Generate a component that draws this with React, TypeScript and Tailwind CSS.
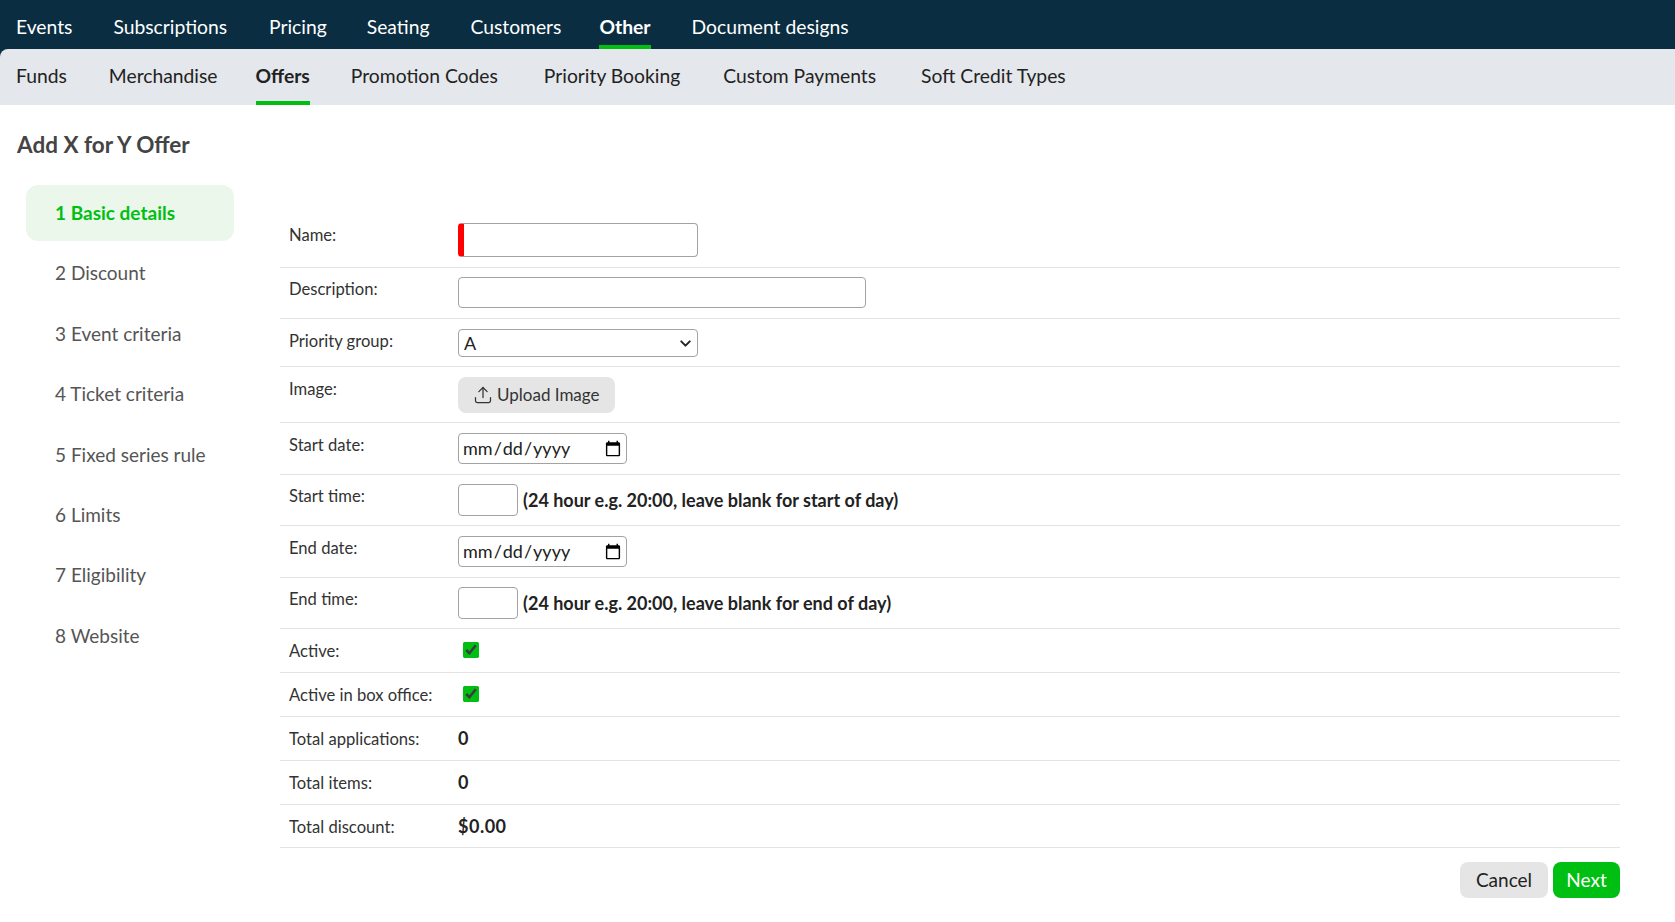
import React from 'react';
import { Upload, ChevronDown } from 'lucide-react';

const topNav = [
  { label: 'Events', gap: '' },
  { label: 'Subscriptions', gap: 'ml-[41px]' },
  { label: 'Pricing', gap: 'ml-[42px]' },
  { label: 'Seating', gap: 'ml-[40px]' },
  { label: 'Customers', gap: 'ml-[41px]' },
  { label: 'Other', gap: 'ml-[38px]' },
  { label: 'Document designs', gap: 'ml-[41px]' },
];
const subNav = [
  { label: 'Funds', gap: '' },
  { label: 'Merchandise', gap: 'ml-[42px]' },
  { label: 'Offers', gap: 'ml-[38px]' },
  { label: 'Promotion Codes', gap: 'ml-[41px]' },
  { label: 'Priority Booking', gap: 'ml-[46px]' },
  { label: 'Custom Payments', gap: 'ml-[43px]' },
  { label: 'Soft Credit Types', gap: 'ml-[45px]' },
];
const steps = ['1 Basic details', '2 Discount', '3 Event criteria', '4 Ticket criteria', '5 Fixed series rule', '6 Limits', '7 Eligibility', '8 Website'];

const inputClass = 'border border-[#a3a3a3] rounded-[4px] bg-white text-[18px] text-[#222]';

function Row({ label, height, tight, children }: { label: string; height: string; tight?: boolean; children: React.ReactNode }) {
  return (
    <div className={`flex border-b border-[#e3e3e3] box-border ${tight ? 'pt-[9px]' : 'pt-[10px]'} ${height}`}>
      <div className="w-[178px] pl-[9px] text-[16.6px] leading-[24px] text-[#333]">{label}</div>
      <div className="flex items-start">{children}</div>
    </div>
  );
}

function Hint({ children }: { children: React.ReactNode }) {
  return <span className="ml-[5px] mt-[4px] text-[18px] leading-[24px] font-bold text-[#222]">{children}</span>;
}

function Value({ children }: { children: React.ReactNode }) {
  return <span className="-mt-[1px] text-[18px] tracking-[0.5px] leading-[24px] font-bold text-[#222]">{children}</span>;
}

export default function App() {
  return (
    <div className="min-h-[922px] bg-white font-['Lato','Liberation_Sans',sans-serif]">
      <nav className="h-[49px] bg-[#0a2d41] flex pl-[16px]">
        {topNav.map((item) => (
          <a
            key={item.label}
            className={`h-[49px] border-b-[4px] text-[19.3px] leading-[53px] text-white ${item.gap} ${
              item.label === 'Other' ? 'border-[#00bf13] font-bold' : 'border-transparent'
            }`}
          >
            {item.label}
          </a>
        ))}
      </nav>

      <div className="bg-[#0a2d41]">
        <nav className="h-[56px] bg-[#e4e7eb] rounded-tl-[8px] flex pl-[16px]">
          {subNav.map((item) => (
            <a
              key={item.label}
              className={`h-[56px] border-b-[4px] text-[19.3px] leading-[53px] text-[#222] ${item.gap} ${
                item.label === 'Offers' ? 'border-[#00bf13] font-bold' : 'border-transparent'
              }`}
            >
              {item.label}
            </a>
          ))}
        </nav>
      </div>

      <h1 className="pl-[17px] pt-[26px] text-[22.5px] leading-[28px] font-bold text-[#444]">Add X for Y Offer</h1>

      <div className="flex pl-[26px] pr-[55px] pt-[26px]">
        <aside className="w-[208px] shrink-0">
          {steps.map((step, i) => (
            <div
              key={step}
              className={`h-[56px] mb-[4.4px] pl-[29px] rounded-[12px] text-[19px] leading-[56px] ${
                i === 0 ? 'bg-[#ecf7ec] text-[#00bf13] font-bold' : 'text-[#555]'
              }`}
            >
              {step}
            </div>
          ))}
        </aside>

        <main className="flex-1 ml-[46px] pt-[28px]">
          <Row label="Name:" height="h-[55px]">
            <input className={`${inputClass} w-[240px] h-[34px] border-l-[6px] border-l-[#f00]`} />
          </Row>
          <Row label="Description:" height="h-[51px]" tight>
            <input className={`${inputClass} w-[408px] h-[31px]`} />
          </Row>
          <Row label="Priority group:" height="h-[48px]">
            <div className="relative">
              <select className={`${inputClass} block appearance-none w-[240px] h-[28px] pl-[5px]`}>
                <option>A</option>
              </select>
              <ChevronDown size={17} strokeWidth={2.75} className="absolute right-[4px] top-[6px] text-[#222] pointer-events-none" />
            </div>
          </Row>
          <Row label="Image:" height="h-[56px]">
            <button className="flex items-center gap-[4px] w-[157px] h-[36px] pl-[15px] rounded-[8px] bg-[#e5e5e5] text-[17px] text-[#333]">
              <Upload size={20} strokeWidth={1.5} />
              Upload Image
            </button>
          </Row>
          <Row label="Start date:" height="h-[52px]">
            <input type="date" className={`${inputClass} w-[169px] h-[31px] pl-[3px] pr-[2px]`} />
          </Row>
          <Row label="Start time:" height="h-[51px]" tight>
            <input className={`${inputClass} w-[60px] h-[32px]`} />
            <Hint>(24 hour e.g. 20:00, leave blank for start of day)</Hint>
          </Row>
          <Row label="End date:" height="h-[52px]">
            <input type="date" className={`${inputClass} w-[169px] h-[31px] pl-[3px] pr-[2px]`} />
          </Row>
          <Row label="End time:" height="h-[51px]" tight>
            <input className={`${inputClass} w-[60px] h-[32px]`} />
            <Hint>(24 hour e.g. 20:00, leave blank for end of day)</Hint>
          </Row>
          <Row label="Active:" height="h-[44px]">
            <input type="checkbox" defaultChecked className="ml-[5px] mt-[3px] w-[16px] h-[16px] accent-[#00bf13]" />
          </Row>
          <Row label="Active in box office:" height="h-[44px]">
            <input type="checkbox" defaultChecked className="ml-[5px] mt-[3px] w-[16px] h-[16px] accent-[#00bf13]" />
          </Row>
          <Row label="Total applications:" height="h-[44px]">
            <Value>0</Value>
          </Row>
          <Row label="Total items:" height="h-[44px]">
            <Value>0</Value>
          </Row>
          <Row label="Total discount:" height="h-[43px]">
            <Value>$0.00</Value>
          </Row>

          <div className="flex justify-end gap-[5px] mt-[14px]">
            <button className="w-[88px] h-[36px] rounded-[8px] bg-[#e5e5e5] text-[19px] text-[#222]">Cancel</button>
            <button className="w-[67px] h-[36px] rounded-[8px] bg-[#00bf13] text-[19px] text-white">Next</button>
          </div>
        </main>
      </div>
    </div>
  );
}
